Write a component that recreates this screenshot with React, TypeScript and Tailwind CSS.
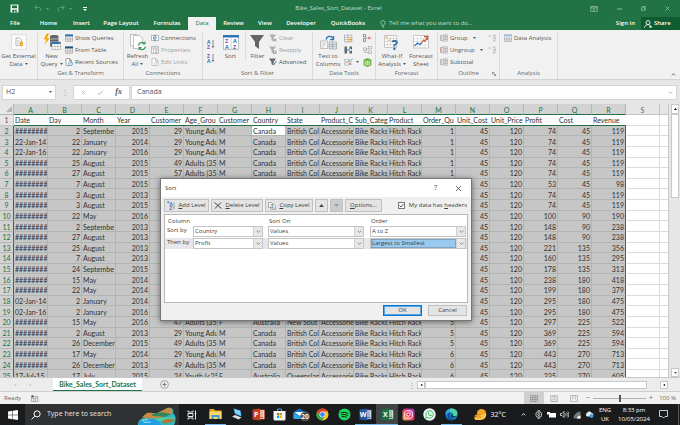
import type { ReactNode } from 'react';
import clsx from 'clsx';

type Row = (string | number)[];

const letters = 'ABCDEFGHIJKLMNOPQR'.split('');

const headings = [
  'Date', 'Day', 'Month', 'Year', 'Customer', 'Age_Grou', 'Customer', 'Country', 'State',
  'Product_C', 'Sub_Categ', 'Product', 'Order_Qu', 'Unit_Cost', 'Unit_Price', 'Profit', 'Cost', 'Revenue',
];

const young = 'Young Adu';
const adults = 'Adults (35';
const hash = '########';
const bc = 'British Col';

// date, day, month, year, age, group, gender, country, state, quantity, profit, cost, revenue
const orders: Row[] = [
  [hash, 2, 'Septembe', 2015, 29, young, 'M', 'Canada', bc, 1, 74, 45, 119],
  ['22-Jan-14', 22, 'January', 2014, 29, young, 'M', 'Canada', bc, 1, 74, 45, 119],
  ['22-Jan-16', 22, 'January', 2016, 29, young, 'M', 'Canada', bc, 1, 74, 45, 119],
  [hash, 25, 'August', 2015, 49, adults, 'M', 'Canada', bc, 1, 74, 45, 119],
  [hash, 27, 'August', 2015, 57, adults, 'M', 'Canada', bc, 1, 74, 45, 119],
  [hash, 7, 'August', 2015, '', '', '', '', '', '', 53, 45, 98],
  [hash, 3, 'August', 2013, '', '', '', '', '', '', 74, 45, 119],
  [hash, 3, 'August', 2015, '', '', '', '', '', '', 74, 45, 119],
  [hash, 22, 'May', 2016, '', '', '', '', '', '', 100, 90, 190],
  [hash, 2, 'Septembe', 2013, '', '', '', '', '', '', 148, 90, 238],
  [hash, 27, 'August', 2013, '', '', '', '', '', '', 148, 90, 238],
  [hash, 25, 'August', 2013, '', '', '', '', '', '', 221, 135, 356],
  [hash, 7, 'August', 2013, '', '', '', '', '', '', 160, 135, 295],
  [hash, 24, 'Septembe', 2015, '', '', '', '', '', '', 178, 135, 313],
  [hash, 15, 'May', 2014, '', '', '', '', '', '', 238, 180, 418],
  [hash, 22, 'May', 2014, '', '', '', '', '', '', 199, 180, 379],
  ['02-Jan-14', 2, 'January', 2014, '', '', '', '', '', '', 295, 180, 475],
  ['02-Jan-16', 2, 'January', 2016, '', '', '', '', '', '', 295, 180, 475],
  [hash, 15, 'May', 2016, 47, adults, 'F', 'Australia', 'New Sout', 5, 297, 225, 522],
  [hash, 2, 'August', 2013, 29, young, 'M', 'Canada', bc, 5, 369, 225, 594],
  [hash, 26, 'December', 2015, 49, adults, 'M', 'Canada', bc, 5, 369, 225, 594],
  [hash, 17, 'May', 2014, 29, young, 'M', 'Canada', bc, 6, 443, 270, 713],
  [hash, 26, 'December', 2013, 49, adults, 'M', 'Canada', bc, 6, 443, 270, 713],
  ['17-Jul-15', 17, 'July', 2015, 24, 'Youth (<25', 'F', 'Australia', 'Queenslan', 6, 335, 270, 605],
];

const rows = orders.map(order => [
  ...order.slice(0, 9),
  ...(order[8] ? ['Accessorie', 'Bike Racks', 'Hitch Rack'] : ['', '', '']),
  order[9],
  45,
  120,
  ...order.slice(10),
]);

const Caret = ({ className = 'text-[#555]' }: { className?: string }) => (
  <svg viewBox="0 0 6 4" className={clsx('h-[2px] w-[3px] shrink-0', className)} aria-hidden="true">
    <path d="M0 0h6L3 4z" fill="currentColor" />
  </svg>
);

const Chevron = ({ className = 'w-[5px]' }: { className?: string }) => (
  <svg viewBox="0 0 8 5" className={clsx('h-[3px]', className)} fill="none" stroke="currentColor" strokeWidth="1.4" aria-hidden="true">
    <path d="M1 1l3 3 3-3" />
  </svg>
);

const TitleBar = () => (
  <header className="flex h-[17px] items-center pl-[10px] pr-[10px] text-white">
    <button type="button" aria-label="Save" className="mr-[15px]">
      <svg viewBox="0 0 16 16" className="size-[9px]" aria-hidden="true">
        <path d="M1 1h14v14H1z" fill="#fff" />
        <path d="M3.500 2.500h9v5h-9zM4 10h8v4.500H9.500V12h-2v2.500H4z" fill="#217346" />
      </svg>
    </button>
    <button type="button" aria-label="Undo" className="mr-[8px] flex items-center gap-[4px] text-[#5f9c7a]">
      <svg viewBox="0 0 16 14" className="h-[7px] w-[8px]" fill="none" stroke="currentColor" strokeWidth="2" aria-hidden="true">
        <path d="M5 1L1.500 5 5 9M2 5h7c7 0 6 7 2 8" />
      </svg>
      <Caret className="text-[#5f9c7a]" />
    </button>
    <button type="button" aria-label="Redo" className="mr-[11px] flex items-center gap-[4px] text-[#5f9c7a]">
      <svg viewBox="0 0 16 14" className="h-[7px] w-[8px]" fill="none" stroke="currentColor" strokeWidth="2" aria-hidden="true">
        <path d="M11 1l3.500 4L11 9M14 5H7C0 5 1 12 5 13" />
      </svg>
      <Caret className="text-[#5f9c7a]" />
    </button>
    <button type="button" aria-label="Customize Quick Access Toolbar">
      <svg viewBox="0 0 6 6" className="size-[4px]" fill="#fff" aria-hidden="true">
        <path d="M0 0h6v1.500H0zM0 3h6L3 6z" />
      </svg>
    </button>
    <h1 className="flex-1 pl-[24px] text-center text-[6px] text-[#c3dccd]">Bike_Sales_Sort_Dataset - Excel</h1>
    <div className="flex w-[104px] items-center justify-end gap-[19px] text-[#8fbda3]">
      <svg viewBox="0 0 14 11" className="h-[6px] w-[8px]" fill="none" stroke="currentColor" strokeWidth="1.500" aria-label="Ribbon Display Options">
        <path d="M1 1h12v9H1zM1 3.500h12M7 9V5M5 7l2-2 2 2" />
      </svg>
      <svg viewBox="0 0 10 10" className="size-[5px]" stroke="currentColor" strokeWidth="2" aria-label="Minimize">
        <path d="M0 6h10" />
      </svg>
      <svg viewBox="0 0 10 10" className="size-[5px]" fill="none" stroke="currentColor" strokeWidth="1.500" aria-label="Restore">
        <path d="M1 3.500h6v6H1zM3 3V1h6.500v6H7.500" />
      </svg>
      <svg viewBox="0 0 10 10" className="size-[5px]" stroke="currentColor" strokeWidth="1.700" aria-label="Close">
        <path d="M1 1l8 8M9 1L1 9" />
      </svg>
    </div>
  </header>
);

const tabs = [
  { label: 'File', className: 'w-[30px]' },
  { label: 'Home', className: 'w-[37px]' },
  { label: 'Insert', className: 'w-[29px]' },
  { label: 'Page Layout', className: 'w-[50px]' },
  { label: 'Formulas', className: 'w-[42px]' },
  { label: 'Data', className: 'w-[28px]' },
  { label: 'Review', className: 'w-[35px]' },
  { label: 'View', className: 'w-[28px]' },
  { label: 'Developer', className: 'w-[44px]' },
  { label: 'QuickBooks', className: 'w-[50px]' },
];

const Tabs = () => (
  <nav className="flex h-[13px] items-stretch text-[6px] text-white">
    {tabs.map(({ label, className }) => (
      <button
        key={label}
        type="button"
        className={clsx('shrink-0 whitespace-nowrap text-center', className, label === 'Data' ? 'bg-[#f1f1f1] text-[#217346]' : 'font-semibold')}
      >
        {label}
      </button>
    ))}
    <button type="button" className="flex items-center gap-[3px] whitespace-nowrap pl-[7px] text-[#c3dccd]">
      <svg viewBox="0 0 10 14" className="h-[8px] w-[6px]" fill="none" stroke="currentColor" strokeWidth="1.300" aria-hidden="true">
        <path d="M3.500 10V8.500C0 6 1 1 5 1s5 5 1.500 7.500V10zM3.500 12.500h3" />
      </svg>
      Tell me what you want to do...
    </button>
    <div className="ml-auto flex font-semibold">
      <button type="button" className="px-[6px]">Sign in</button>
      <button type="button" className="flex w-[39px] items-center gap-[2px] bg-[#0e5c2f] pl-[3px]">
        <svg viewBox="0 0 14 14" className="size-[8px]" fill="none" stroke="#fff" strokeWidth="1.500" aria-hidden="true">
          <circle cx="7" cy="4.500" r="3.500" />
          <path d="M1 13.500C1 10 4 8 7 8c2 0 3 1 4 2M9 12h5M11.500 9.500v5" />
        </svg>
        Share
      </button>
    </div>
  </nav>
);

type GroupProps = { label?: string; className: string; children: ReactNode };

const Group = ({ label, className, children }: GroupProps) => (
  <section className={clsx('flex shrink-0 flex-col border-r border-[#dadada]', className)}>
    <div className="flex h-[37px] items-start">{children}</div>
    <p className="h-[9px] text-center leading-[9px] text-[#666]">{label}</p>
  </section>
);

type BigProps = { lines: [string, string?]; caret?: boolean; className: string; children: ReactNode };

const BigButton = ({ lines, caret, className, children }: BigProps) => (
  <button type="button" className={clsx('flex shrink-0 flex-col items-center whitespace-nowrap leading-[8px]', className)}>
    <span className="flex h-[20px] items-center">{children}</span>
    <span>{lines[0]}</span>
    {lines[1] && (
      <span className="flex items-center gap-[2px]">
        {lines[1]}
        {caret && <Caret />}
      </span>
    )}
  </button>
);

type SmallProps = { label: string; dim?: boolean; caret?: boolean; children: ReactNode };

const SmallButton = ({ label, dim, caret, children }: SmallProps) => (
  <button type="button" className={clsx('flex h-[12px] items-center gap-[2px] whitespace-nowrap', dim && 'text-[#a0a0a0]')}>
    {children}
    {label}
    {caret && <span className="pl-[3px]"><Caret /></span>}
  </button>
);

const TableIcon = ({ className = 'size-[8px]', color = '#2f75b5' }: { className?: string; color?: string }) => (
  <svg viewBox="0 0 16 16" className={clsx('shrink-0', className)} aria-hidden="true">
    <path d="M.5 1.500h15v13H.5z" fill="#fff" stroke="#808080" />
    <path d="M0 1h16v4H0z" fill={color} />
    <path d="M0 8.500h16M0 11.500h16M5.500 5v10M10.500 5v10" stroke="#909090" />
  </svg>
);

const PageIcon = ({ dim }: { dim?: boolean }) => (
  <svg viewBox="0 0 16 16" className="size-[8px] shrink-0" fill="none" aria-hidden="true">
    <path d="M2 1h7l4 4v10H2zM9 1v4h4" fill="#fff" stroke={dim ? '#aaa' : '#777'} strokeWidth="1.300" />
    <circle cx="11" cy="11.500" r="4" fill="#fff" stroke={dim ? '#aaa' : '#2f75b5'} strokeWidth="1.300" />
    <path d="M11 9.500v2h2" stroke={dim ? '#aaa' : '#2f75b5'} />
  </svg>
);

const ListIcon = () => (
  <svg viewBox="0 0 16 16" className="size-[8px] shrink-0" fill="none" stroke="#a5a5a5" strokeWidth="1.300" aria-hidden="true">
    <path d="M1 1h14v14H1zM1 4h14M4 7h2M8 7h5M4 10h2M8 10h5M4 13h2M8 13h5" />
  </svg>
);

const SortIcon = ({ descending }: { descending?: boolean }) => (
  <svg viewBox="0 0 16 20" className="h-[10px] w-[8px]" fontSize="10" fontWeight="700" aria-hidden="true">
    <text x="0" y={descending ? 19 : 9} fill="#2f75b5">A</text>
    <text x="0" y={descending ? 9 : 19} fill="#8a4fa3">Z</text>
    <path d="M12 2v15M9.500 14l2.500 3 2.500-3" fill="none" stroke="#666" strokeWidth="1.500" />
  </svg>
);

const Funnel = ({ className = 'size-[8px]', dim, mark }: { className?: string; dim?: boolean; mark?: string }) => (
  <svg viewBox="0 0 16 16" className={clsx('shrink-0', className)} aria-hidden="true">
    <path d="M0 1h14L9 8v7l-4-3V8z" fill={dim ? '#b0b0b0' : '#666'} />
    {mark && <path d={mark} fill="none" stroke={dim ? '#999' : '#2f75b5'} strokeWidth="2" />}
  </svg>
);

const OutlineIcon = ({ color }: { color: string }) => (
  <svg viewBox="0 0 16 16" className="size-[8px] shrink-0" fill="none" aria-hidden="true">
    <path d="M6 1.500h9v13H6zM6 5h9M6 8h9M6 11h9M10.500 1v13" stroke="#999" />
    <path d="M5 3H1.500v10H5M0 8h3" stroke={color} strokeWidth="1.300" />
  </svg>
);

const Ribbon = () => (
  <div className="flex h-[50px] shrink-0 border-b border-[#d2d2d2] bg-[#f1f1f1] pt-[2px] text-[6px] text-[#555]">
    <Group className="w-[38px]">
      <BigButton lines={['Get External', 'Data']} caret className="w-[37px]">
        <svg viewBox="0 0 32 32" className="size-[16px]" aria-hidden="true">
          <path d="M1 1h30v30H1z" fill="#fafafa" stroke="#c8c8c8" />
          <path d="M10 8h7l4 4v11H10z" fill="#fff" stroke="#777" />
          <path d="M12 13h5M12 16h5M12 19h4" stroke="#aaa" />
          <path d="M17 16c0-2 7-2 7 0v7c0 2-7 2-7 0z" fill="#e8b04b" />
        </svg>
      </BigButton>
    </Group>

    <Group label="Get & Transform" className="w-[86px]">
      <BigButton lines={['New', 'Query']} caret className="w-[27px]">
        <svg viewBox="0 0 36 36" className="size-[18px]" aria-hidden="true">
          <path d="M14 6c0-3 17-3 17 0v20c0 3-17 3-17 0z" fill="#666" />
          <path d="M14 12h17M14 18h17" stroke="#fff" />
          <path d="M7 1L1 13h5L3 24l11-14H8l5-9z" fill="#f0a30a" stroke="#fff" strokeWidth=".6" />
          <path d="M18 18h17v15H18z" fill="#fff" stroke="#888" />
          <path d="M18 18h17v4H18z" fill="#2f75b5" />
          <path d="M18 27h17M24 22v11M29.500 22v11" stroke="#999" />
        </svg>
      </BigButton>
      <div className="flex flex-col">
        <SmallButton label="Show Queries"><TableIcon /></SmallButton>
        <SmallButton label="From Table"><TableIcon color="#1f4e79" /></SmallButton>
        <SmallButton label="Recent Sources"><PageIcon /></SmallButton>
      </div>
    </Group>

    <Group label="Connections" className="w-[79px]">
      <BigButton lines={['Refresh', 'All']} caret className="w-[27px]">
        <svg viewBox="0 0 36 36" className="size-[18px]" fill="none" aria-hidden="true">
          <path d="M3 3h12l4 4v19H3z" fill="#fff" stroke="#888" />
          <path d="M9 5h12l6 6v20H9z" fill="#fff" stroke="#888" />
          <circle cx="26" cy="26" r="9" fill="#fff" />
          <path d="M19 25a7 7 0 0112-4M33 27a7 7 0 01-12 4" stroke="#3c9a5f" strokeWidth="3" />
          <path d="M33 16v7h-7zM19 35v-7h7z" fill="#3c9a5f" />
        </svg>
      </BigButton>
      <div className="flex flex-col">
        <SmallButton label="Connections">
          <svg viewBox="0 0 16 16" className="size-[8px] shrink-0" fill="none" aria-hidden="true">
            <path d="M1 3h14v10H1z" fill="#fff" stroke="#777" />
            <path d="M5 6h5v4H5zM8 1v4M8 11v4" stroke="#2f75b5" strokeWidth="1.500" />
          </svg>
        </SmallButton>
        <SmallButton label="Properties" dim><ListIcon /></SmallButton>
        <SmallButton label="Edit Links" dim><PageIcon dim /></SmallButton>
      </div>
    </Group>

    <Group label="Sort & Filter" className="w-[110px]">
      <div className="flex w-[16px] shrink-0 flex-col items-end">
        <button type="button" aria-label="Sort A to Z" className="mt-[4px] h-[16px] w-[12px]"><SortIcon /></button>
        <button type="button" aria-label="Sort Z to A" className="h-[12px] w-[12px]"><SortIcon descending /></button>
      </div>
      <BigButton lines={['Sort']} className="w-[23px]">
        <svg viewBox="0 0 32 30" className="h-[15px] w-[16px]" fontSize="11" fontWeight="700" aria-hidden="true">
          <path d="M1 1h30v28H1z" fill="#fff" stroke="#888" />
          <path d="M0 0h32v5H0z" fill="#2f75b5" />
          <path d="M16 5v24" stroke="#999" />
          <text x="4" y="16" fill="#8a4fa3">Z</text>
          <text x="4" y="27" fill="#2f75b5">A</text>
          <text x="20" y="16" fill="#2f75b5">A</text>
          <text x="20" y="27" fill="#8a4fa3">Z</text>
        </svg>
      </BigButton>
      <BigButton lines={['Filter']} className="ml-[3px] w-[24px] border-l border-[#dadada]">
        <Funnel className="size-[16px]" />
      </BigButton>
      <div className="flex flex-col">
        <SmallButton label="Clear" dim><Funnel dim mark="M9 9l6 6M15 9l-6 6" /></SmallButton>
        <SmallButton label="Reapply" dim><Funnel dim mark="M9 10h5v5H9z" /></SmallButton>
        <SmallButton label="Advanced"><Funnel mark="M15 6l-6 8" /></SmallButton>
      </div>
    </Group>

    <Group label="Data Tools" className="w-[63px]">
      <BigButton lines={['Text to', 'Columns']} className="w-[30px]">
        <svg viewBox="0 0 34 30" className="h-[15px] w-[17px]" fill="none" aria-hidden="true">
          <path d="M1 12h14v15H1z" fill="#fff" stroke="#888" />
          <path d="M18 14h15v14H18z" fill="#d9e6f2" stroke="#888" />
          <path d="M3 16h9M3 20h9M3 24h6M18 19h15M18 23h15M25 14v14" stroke="#888" />
          <path d="M12 9c2-8 11-8 14-2M27 2v7h-7" stroke="#2f75b5" strokeWidth="2.500" />
        </svg>
      </BigButton>
      <div className="grid grid-cols-[19px_11px] grid-rows-[12px_12px_12px] items-center pl-px">
        <svg viewBox="0 0 16 16" className="size-[9px]" fill="none" aria-label="Flash Fill">
          <path d="M1 2h13v12H1zM1 6h13M1 10h13M7 2v12" fill="#fff" stroke="#888" />
          <path d="M14 5l-6 6h3l-2 4 6-6h-3z" fill="#f0a30a" />
        </svg>
        <svg viewBox="0 0 18 16" className="h-[8px] w-[9px]" fill="none" aria-label="Consolidate">
          <path d="M1 1h4v5H1zM1 9h4v6H1z" stroke="#777" strokeWidth="1.500" />
          <path d="M5 8h4" stroke="#777" strokeWidth="1.500" />
          <path d="M17 8h-6M13 5l-3 3 3 3" stroke="#d1504c" strokeWidth="1.500" />
        </svg>
        <svg viewBox="0 0 18 16" className="h-[8px] w-[9px]" aria-label="Remove Duplicates">
          <path d="M1 1h5v14H1zM11 1h5v14h-5z" fill="#666" />
          <path d="M2 6h3v4H2z" fill="#2f75b5" />
          <path d="M6 8h5" stroke="#2f75b5" strokeWidth="2" />
          <path d="M12 6h3v4h-3z" fill="#fff" />
        </svg>
        <svg viewBox="0 0 18 16" className="h-[8px] w-[9px]" fill="none" stroke="#aaa" strokeWidth="1.500" aria-label="Relationships">
          <path d="M1 4h6v5H1zM11 1h6v5h-6zM11 10h6v5h-6zM7 6h4M4 9v4h7" />
        </svg>
        <span className="flex items-center gap-[3px]">
          <svg viewBox="0 0 18 16" className="h-[8px] w-[9px] shrink-0" fill="none" aria-label="Data Validation">
            <path d="M1 3h9v4H1zM1 10h9v4H1z" fill="#fff" stroke="#888" />
            <path d="M9 4l3 3 5-6" stroke="#3c9a5f" strokeWidth="1.500" />
            <path d="M10 9l5 5M15 9l-5 5" stroke="#d1504c" strokeWidth="1.500" />
          </svg>
          <Caret />
        </span>
        <svg viewBox="0 0 16 16" className="size-[9px]" aria-label="Manage Data Model">
          <path d="M8 0l7 3v10l-7 3-7-3V3z" fill="#6cb33f" />
          <path d="M4 6h8v6H4zM4 9h8M8 6v6" fill="none" stroke="#fff" />
        </svg>
      </div>
    </Group>

    <Group label="Forecast" className="w-[62px]">
      <BigButton lines={['What-If', 'Analysis']} caret className="w-[32px]">
        <svg viewBox="0 0 32 32" className="size-[16px]" aria-hidden="true">
          <path d="M1 3h24v24H1z" fill="#fff" stroke="#999" />
          <path d="M1 9h24M1 15h24M1 21h24M7 3v24M13 3v24M19 3v24" stroke="#bbb" />
          <path d="M3 5h3v3H3zM9 11h3v3H9z" fill="#e8b04b" />
          <text x="15" y="31" fontSize="27" fontWeight="700" fill="#2b6cb0">?</text>
        </svg>
      </BigButton>
      <BigButton lines={['Forecast', 'Sheet']} className="w-[26px]">
        <svg viewBox="0 0 32 32" className="size-[16px]" fill="none" aria-hidden="true">
          <path d="M1 3h30v25H1z" fill="#fff" stroke="#999" />
          <path d="M1 9h30M1 15h30M1 22h30M9 3v25M16 3v25M24 3v25" stroke="#ccc" />
          <path d="M3 24l6-6 5 3 4-4" stroke="#2f75b5" strokeWidth="2.500" />
          <path d="M17 18l4-6 3 2 5-8M29 12V5h-7" stroke="#d9542b" strokeWidth="2.500" />
        </svg>
      </BigButton>
    </Group>

    <Group label="Outline" className="w-[62px]">
      <div className="flex flex-col pl-[2px]">
        <SmallButton label="Group" caret><OutlineIcon color="#888" /></SmallButton>
        <SmallButton label="Ungroup" caret><OutlineIcon color="#d1504c" /></SmallButton>
        <SmallButton label="Subtotal"><OutlineIcon color="#888" /></SmallButton>
      </div>
      <div className="ml-auto flex flex-col pr-[3px] text-[#aaa]">
        {['Show Detail', 'Hide Detail'].map(label => (
          <button key={label} type="button" aria-label={label} className="flex h-[12px] items-center">
            <svg viewBox="0 0 16 16" className="size-[8px]" fill="none" stroke="currentColor" strokeWidth="1.500" aria-hidden="true">
              <path d="M1 4h5M9 2h5v4M9 8h5M9 14h5V6" />
            </svg>
          </button>
        ))}
        <button type="button" aria-label="Outline settings" className="mt-[16px] self-end text-[#777]">
          <svg viewBox="0 0 8 8" className="size-[4px]" fill="none" stroke="currentColor" strokeWidth="1.500" aria-hidden="true">
            <path d="M1 5V1h4M3 3l4 4M7 4v3H4" />
          </svg>
        </button>
      </div>
    </Group>

    <Group label="Analysis" className="w-[58px]">
      <div className="pl-[4px]">
        <SmallButton label="Data Analysis"><TableIcon color="#9dc3e6" /></SmallButton>
      </div>
    </Group>

    <button type="button" aria-label="Collapse the Ribbon" className="ml-auto self-end px-[4px] pb-[3px]">
      <Chevron className="w-[5px] rotate-180" />
    </button>
  </div>
);

const FormulaBar = () => (
  <div className="flex h-[24px] shrink-0 items-center gap-[4px] bg-[#e6e6e6] pl-[2px] pr-[3px] text-[7px] text-[#555]">
    <label className="flex h-[15px] w-[54px] items-center border border-[#d4d4d4] bg-white pl-[3px] pr-[3px]">
      <input aria-label="Name Box" defaultValue="H2" className="w-full min-w-0 bg-transparent outline-none" />
      <Caret />
    </label>
    <span className="w-[9px] text-center text-[8px] text-[#aaa]">⋮</span>
    <div className="flex h-[15px] w-[57px] items-center justify-between border border-[#d4d4d4] bg-white px-[7px]">
      <svg viewBox="0 0 10 10" className="size-[5px]" stroke="#b0b0b0" strokeWidth="1.500" aria-label="Cancel entry">
        <path d="M1 1l8 8M9 1L1 9" />
      </svg>
      <svg viewBox="0 0 12 10" className="h-[5px] w-[7px]" fill="none" stroke="#b0b0b0" strokeWidth="1.800" aria-label="Enter">
        <path d="M1 6l3 3 7-8" />
      </svg>
      <button type="button" aria-label="Insert Function" className="font-['Liberation_Serif',serif] text-[8px] font-bold italic leading-none">fx</button>
    </div>
    <label className="-ml-[3px] flex h-[15px] flex-1 items-center border border-[#d4d4d4] bg-white pl-[5px] pr-[3px]">
      <input aria-label="Formula Bar" defaultValue="Canada" className="w-full bg-transparent outline-none" />
      <Chevron className="w-[5px] text-[#aaa]" />
    </label>
  </div>
);

const Sheet = () => (
  <main className="flex min-h-0 flex-1 bg-[#e6e6e6]">
    <div className="min-w-0 flex-1 overflow-hidden bg-white">
      <table className="h-[277px] w-full table-fixed border-separate border-spacing-0 font-[Lato,sans-serif] text-[7px] leading-[8px] text-[#303030]">
        <colgroup>
          <col className="w-[14px]" />
          {letters.map(letter => <col key={letter} className="w-[34px]" />)}
          <col className="w-[34px]" />
          <col />
        </colgroup>
        <thead>
          <tr className="h-[11px] bg-[#d2d2d2] text-[#217346]">
            <th className="border-b border-r border-[#b5b5b5] bg-[#e6e6e6] p-0">
              <svg viewBox="0 0 8 8" className="ml-auto mr-px size-[6px]" aria-hidden="true"><path d="M8 0v8H0z" fill="#b5b5b5" /></svg>
            </th>
            {letters.map(letter => (
              <th key={letter} className="border-b border-r border-b-[#217346] border-r-[#b5b5b5] p-0 pt-px font-normal">{letter}</th>
            ))}
            <th className="border-b border-r border-[#c4c4c4] bg-[#e6e6e6] p-0 pt-px font-normal text-[#666]">S</th>
            <th className="border-b border-[#c4c4c4] bg-[#e6e6e6] p-0" />
          </tr>
        </thead>
        <tbody>
          <tr>
            <th className="border-b border-r border-[#c4c4c4] bg-[#e6e6e6] p-0 pt-px text-center font-normal text-[#555]">1</th>
            {headings.map((heading, i) => (
              <td key={i} className="overflow-hidden whitespace-nowrap border-b border-b-[#217346] p-0 pl-px pt-px">{heading}</td>
            ))}
            <td className="border-b border-r border-[#dcdcdc] p-0" />
            <td className="border-b border-[#dcdcdc] p-0" />
          </tr>
          {rows.map((row, i) => (
            <tr key={i}>
              <th className="border-b border-r border-b-[#b5b5b5] border-r-[#217346] bg-[#d2d2d2] p-0 pt-px text-center font-normal text-[#217346]">{i + 2}</th>
              {row.map((cell, j) => (
                <td
                  key={j}
                  className={clsx(
                    'overflow-hidden whitespace-nowrap border-b border-r border-b-[#b0b5b2] p-0 pt-px',
                    j === 17 ? 'border-r-[#217346]' : 'border-r-[#b0b5b2]',
                    i === 0 && j === 7 ? 'bg-white' : 'bg-[#c6c6c6]',
                    typeof cell === 'number' ? 'pr-px text-right' : 'pl-px',
                    cell === hash && 'text-center',
                  )}
                >
                  {cell}
                </td>
              ))}
              <td className="border-b border-r border-[#dcdcdc] p-0" />
              <td className="border-b border-[#dcdcdc] p-0" />
            </tr>
          ))}
        </tbody>
      </table>
    </div>
    <div className="flex w-[12px] flex-col items-center border-l border-[#c8c8c8] pl-px">
      <button type="button" aria-label="Scroll up" className="flex h-[10px] w-[8px] items-center justify-center border border-[#c8c8c8] bg-white">
        <Caret className="rotate-180" />
      </button>
      <div className="h-[84px] w-[8px] border border-[#c8c8c8] bg-white" />
      <button type="button" aria-label="Scroll down" className="mt-auto flex h-[9px] w-[8px] items-center justify-center border border-[#c8c8c8] bg-white">
        <Caret />
      </button>
    </div>
  </main>
);

const SheetTabs = () => (
  <div className="flex h-[14px] shrink-0 items-stretch border-t border-[#c8c8c8] bg-[#ececec] text-[6px]">
    <div className="flex w-[53px] items-center gap-[12px] pl-[14px]">
      <Caret className="rotate-90 text-[#bbb]" />
      <Caret className="-rotate-90 text-[#bbb]" />
    </div>
    <button type="button" className="w-[89px] border-b border-[#217346] bg-white font-[Lato,sans-serif] text-[7px] font-bold leading-[11px] text-[#217346]">
      Bike_Sales_Sort_Dataset
    </button>
    <button type="button" aria-label="New sheet" className="ml-[18px]">
      <svg viewBox="0 0 16 16" className="size-[9px]" fill="none" stroke="#777" aria-hidden="true">
        <circle cx="8" cy="8" r="7" />
        <path d="M8 4.500v7M4.500 8h7" strokeWidth="1.700" />
      </svg>
    </button>
    <div className="ml-auto flex w-[272px] items-center pr-[12px]">
      <span className="w-[9px] text-[8px] leading-none text-[#999]">⋮</span>
      <button type="button" aria-label="Scroll left" className="flex h-[8px] w-[8px] items-center justify-center border border-[#c8c8c8] bg-white">
        <Caret className="rotate-90" />
      </button>
      <div className="h-[8px] flex-1 border border-[#c8c8c8] bg-white" />
      <button type="button" aria-label="Scroll right" className="ml-[13px] flex h-[8px] w-[8px] items-center justify-center border border-[#c8c8c8] bg-white">
        <Caret className="-rotate-90" />
      </button>
    </div>
  </div>
);

const StatusBar = () => (
  <footer className="flex h-[13px] shrink-0 items-center border-t border-[#d0d0d0] bg-[#f1f1f1] pl-[4px] pr-[4px] text-[6px] text-[#666]">
    Ready
    <svg viewBox="0 0 16 14" className="ml-[10px] h-[7px] w-[8px]" fill="none" stroke="#777" aria-hidden="true">
      <path d="M1 3h13v10H1zM1 6h13M5 6v7M9 6v7" />
      <circle cx="3" cy="2.500" r="2" fill="#555" />
    </svg>
    <div className="ml-auto flex h-full items-center">
      <button type="button" aria-label="Normal" className="flex h-full w-[20px] items-center justify-center bg-[#cfcfcf]">
        <svg viewBox="0 0 16 14" className="h-[7px] w-[8px]" fill="none" stroke="#777" aria-hidden="true">
          <path d="M1 1h14v12H1zM1 5h14M1 9h14M5.500 1v12M10.500 1v12" />
        </svg>
      </button>
      <button type="button" aria-label="Page Layout" className="flex w-[20px] justify-center">
        <svg viewBox="0 0 16 14" className="h-[7px] w-[8px]" fill="none" stroke="#999" aria-hidden="true">
          <path d="M1 1h14v12H1zM4 3h8v10H4zM6 6h4M6 9h4" />
        </svg>
      </button>
      <button type="button" aria-label="Page Break Preview" className="flex w-[20px] justify-center">
        <svg viewBox="0 0 16 14" className="h-[7px] w-[8px]" fill="none" stroke="#888" aria-hidden="true">
          <path d="M1 1h14v12H1zM5.500 1v8M10.500 1v8" />
        </svg>
      </button>
      <button type="button" aria-label="Zoom out" className="w-[9px] text-center text-[7px]">−</button>
      <input
        type="range"
        aria-label="Zoom"
        min="10"
        max="190"
        defaultValue="100"
        className="h-[7px] w-[53px] appearance-none bg-[linear-gradient(#b0b0b0,#b0b0b0)] bg-[length:100%_1px] bg-center bg-no-repeat [&::-webkit-slider-thumb]:h-[7px] [&::-webkit-slider-thumb]:w-[2px] [&::-webkit-slider-thumb]:appearance-none [&::-webkit-slider-thumb]:bg-[#555]"
      />
      <button type="button" aria-label="Zoom in" className="w-[10px] text-center text-[7px]">+</button>
      <span className="w-[20px] text-right">100 %</span>
    </div>
  </footer>
);

type ComboProps = { label: string; value: string; className: string; active?: boolean };

const Combo = ({ label, value, className, active }: ComboProps) => (
  <div className={clsx('flex h-[11px] shrink-0 border border-[#c4c4c4] bg-white', className)}>
    <select
      aria-label={label}
      defaultValue={value}
      className={clsx('min-w-0 flex-1 appearance-none pl-px leading-[9px]', active ? 'bg-[#99c9ef] outline outline-1 -outline-offset-1 outline-[#7fa3c0]' : 'outline-none')}
    >
      <option>{value}</option>
    </select>
    <span className="flex w-[9px] items-center justify-center border-l border-[#d0d0d0] bg-[#e8e8e8] text-[#777]">
      <Chevron />
    </span>
  </div>
);

const ToolButton = ({ className, children }: { className: string; children: ReactNode }) => (
  <button type="button" className={clsx('flex h-[13px] shrink-0 items-center justify-center gap-[3px] whitespace-nowrap border border-[#c0c0c0]', className)}>
    {children}
  </button>
);

const levels = [
  { label: 'Sort by', column: 'Country', order: 'A to Z' },
  { label: 'Then by', column: 'Profit', order: 'Largest to Smallest' },
];

const SortDialog = () => (
  <div
    role="dialog"
    aria-labelledby="sort-title"
    className="absolute left-[160px] top-[178px] w-[312px] border border-[#777] bg-[#f0f0f0] text-[6px] text-[#404040] shadow-[0_1px_6px_rgba(0,0,0,0.5)]"
  >
    <div className="flex h-[18px] items-center bg-white pl-[4px] pr-[10px]">
      <h2 id="sort-title" className="flex-1">Sort</h2>
      <button type="button" aria-label="Help" className="mr-[19px] text-[7px]">?</button>
      <button type="button" aria-label="Close">
        <svg viewBox="0 0 10 10" className="size-[5px]" stroke="#333" strokeWidth="1.500" aria-hidden="true">
          <path d="M0 0l10 10M10 0L0 10" />
        </svg>
      </button>
    </div>

    <div className="px-[3px] pb-[4px] pt-[2px]">
      <div className="flex items-center gap-[2px]">
        <ToolButton className="w-[45px] bg-[#e4e4e4]">
          <svg viewBox="0 0 16 18" className="h-[9px] w-[8px]" fontSize="9" fontWeight="700" aria-hidden="true">
            <path d="M2.500 0v5M0 2.500h5" stroke="#2f75b5" strokeWidth="1.300" />
            <text x="5" y="9" fill="#2f75b5">A</text>
            <text x="5" y="17" fill="#8a4fa3">Z</text>
            <path d="M14 3v12M12.500 13l1.500 2 1.500-2" fill="none" stroke="#555" />
          </svg>
          <span><u>A</u>dd Level</span>
        </ToolButton>
        <ToolButton className="w-[52px] bg-[#e4e4e4]">
          <svg viewBox="0 0 16 14" className="h-[7px] w-[8px]" stroke="#444" strokeWidth="2" aria-hidden="true">
            <path d="M1 1l14 12M14 1L2 13" />
          </svg>
          <span><u>D</u>elete Level</span>
        </ToolButton>
        <ToolButton className="w-[48px] bg-[#e4e4e4]">
          <svg viewBox="0 0 16 16" className="size-[8px]" fill="#fff" stroke="#666" aria-hidden="true">
            <path d="M1 1h6l2 2v8H1zM6 5h6l3 3v7H6z" />
            <path d="M8 10h5M8 12.500h5" stroke="#2f75b5" />
          </svg>
          <span><u>C</u>opy Level</span>
        </ToolButton>
        <ToolButton className="w-[13px] bg-[#e4e4e4]">
          <svg viewBox="0 0 8 5" className="h-[3px] w-[5px]" aria-label="Move Up"><path d="M4 0l4 5H0z" fill="#444" /></svg>
        </ToolButton>
        <ToolButton className="w-[13px] bg-[#cccccc]">
          <svg viewBox="0 0 8 5" className="h-[3px] w-[5px]" aria-label="Move Down"><path d="M4 5l4-5H0z" fill="#999" /></svg>
        </ToolButton>
        <ToolButton className="w-[37px] bg-[#e4e4e4]"><span><u>O</u>ptions...</span></ToolButton>
        <label className="ml-auto flex items-center gap-[4px] whitespace-nowrap pr-px">
          <span className="grid">
            <input type="checkbox" defaultChecked className="peer col-start-1 row-start-1 size-[7px] appearance-none border border-[#777] bg-white" />
            <svg viewBox="0 0 14 14" className="pointer-events-none invisible col-start-1 row-start-1 size-[7px] peer-checked:visible" fill="none" stroke="#444" strokeWidth="1.800" aria-hidden="true">
              <path d="M3 7l3 3 5-6" />
            </svg>
          </span>
          <span>My data has <u>h</u>eaders</span>
        </label>
      </div>

      <div className="mt-[2px] h-[89px] border border-[#b8b8b8] bg-white pt-px">
        <div className="flex h-[10px] items-center pl-[3px]">
          <span className="w-[101px]">Column</span>
          <span className="w-[102px]">Sort On</span>
          <span>Order</span>
        </div>
        {levels.map(({ label, column, order }, i) => (
          <div key={label} className={clsx('mb-px flex h-[11px] items-start pl-[2px] pr-px', i === 1 && 'bg-[#e6e6ec]')}>
            <span className="w-[26px] leading-[8px]">{label}</span>
            <Combo label={`${label} column`} value={column} className="w-[70px]" />
            <Combo label={`${label} sort on`} value="Values" className="ml-[5px] w-[96px]" />
            <Combo label={`${label} order`} value={order} className="ml-[6px] w-[96px]" active={i === 1} />
          </div>
        ))}
      </div>

      <div className="mt-[2px] flex justify-end gap-[6px] pr-px">
        <button type="button" className="h-[11px] w-[39px] border border-[#0078d7] bg-[#e4e4e4] leading-[9px] outline outline-1 -outline-offset-2 outline-[#5aa5e0]">OK</button>
        <button type="button" className="h-[11px] w-[39px] border border-[#c0c0c0] bg-[#e4e4e4] leading-[9px]">Cancel</button>
      </div>
    </div>
  </div>
);

const Office = ({ letter, color, dark }: { letter: string; color: string; dark: string }) => (
  <svg viewBox="0 0 26 26" className="size-[13px]" aria-hidden="true">
    <path d="M13 4h12v18H13z" fill="#fff" stroke={color} strokeWidth="1.500" />
    <path d="M16 8h7M16 12h7M16 16h7M16 19h7" stroke={color} strokeWidth="1.800" />
    <path d="M1 3l15-2v24L1 23z" fill={dark} />
    <text x="8.500" y="18" textAnchor="middle" fontSize="14" fontWeight="700" fill="#fff">{letter}</text>
  </svg>
);

const apps: { name: string; open?: boolean; icon: ReactNode }[] = [
  {
    name: 'File Explorer',
    open: true,
    icon: (
      <svg viewBox="0 0 26 24" className="h-[12px] w-[13px]" aria-hidden="true">
        <path d="M1 2h9l2 3h13v17H1z" fill="#e9a820" />
        <path d="M1 7h24v15H1z" fill="#ffd765" />
        <path d="M5 22v-8h16v8h-4v-4H9v4z" fill="#3b9de0" />
      </svg>
    ),
  },
  {
    name: 'This PC',
    icon: (
      <svg viewBox="0 0 26 24" className="h-[12px] w-[13px]" aria-hidden="true">
        <path d="M5 1l14 4 2 12-13-5z" fill="#4cb4ee" />
        <path d="M7 3l11 3 1 8-10-4z" fill="#8ad5fa" />
        <path d="M2 17l6-3 13 5-6 4z" fill="#d8dee3" />
      </svg>
    ),
  },
  { name: 'PowerPoint', icon: <Office letter="P" color="#d35230" dark="#c43e1c" /> },
  {
    name: 'Microsoft Store',
    icon: (
      <svg viewBox="0 0 26 26" className="size-[13px]" aria-hidden="true">
        <path d="M9 6V2h8v4" fill="none" stroke="#3ba0e6" strokeWidth="2" />
        <path d="M1 6h24v16q0 3-3 3H4q-3 0-3-3z" fill="#f4f4f4" />
        <path d="M8 10h4.500v4.500H8z" fill="#f25022" />
        <path d="M13.500 10H18v4.500h-4.500z" fill="#7fba00" />
        <path d="M8 15.500h4.500V20H8z" fill="#00a4ef" />
        <path d="M13.500 15.500H18V20h-4.500z" fill="#ffb900" />
      </svg>
    ),
  },
  {
    name: 'Mail',
    icon: (
      <svg viewBox="0 0 34 26" className="h-[13px] w-[17px]" aria-hidden="true">
        <path d="M1 8L13 1l12 7v14H1z" fill="#0f6cbd" />
        <path d="M3 8h20l-10 8z" fill="#fff" />
        <path d="M1 9l12 8 12-8v13H1z" fill="#35a3ea" />
        <circle cx="24" cy="17" r="9" fill="#3a3f44" stroke="#aaa" />
        <text x="24" y="21.500" textAnchor="middle" fontSize="13" fontWeight="700" fill="#fff">20</text>
      </svg>
    ),
  },
  {
    name: 'Chrome',
    icon: (
      <svg viewBox="0 0 26 26" className="size-[13px]" aria-hidden="true">
        <circle cx="13" cy="13" r="12" fill="#fbc116" />
        <path d="M2.600 7A12 12 0 0123.400 7H13L8 16z" fill="#e33b2e" />
        <path d="M2.600 7A12 12 0 0012 25l6-9H8z" fill="#2da94f" />
        <circle cx="13" cy="13" r="5.500" fill="#4285f4" stroke="#fff" strokeWidth="1.500" />
      </svg>
    ),
  },
  {
    name: 'Spotify',
    icon: (
      <svg viewBox="0 0 26 26" className="size-[13px]" fill="none" aria-hidden="true">
        <circle cx="13" cy="13" r="12" fill="#1ed760" />
        <path d="M6 9.500c5-1.500 10-1 14 1.500M7 13.500c4-1 8-.7 12 1.500M8 17.500c3-.8 6-.6 9 1" stroke="#191414" strokeWidth="2" strokeLinecap="round" />
      </svg>
    ),
  },
  { name: 'Word', open: true, icon: <Office letter="W" color="#2b579a" dark="#2b579a" /> },
  { name: 'Excel', open: true, icon: <Office letter="X" color="#217346" dark="#1d7044" /> },
  {
    name: 'Instagram',
    icon: (
      <svg viewBox="0 0 26 26" className="size-[13px]" fill="none" aria-hidden="true">
        <defs>
          <linearGradient id="insta" x1="0" y1="1" x2="1" y2="0">
            <stop stopColor="#fdc04c" />
            <stop offset=".5" stopColor="#ee2a5e" />
            <stop offset="1" stopColor="#8a35d0" />
          </linearGradient>
        </defs>
        <rect x="1" y="1" width="24" height="24" rx="5" fill="url(#insta)" />
        <rect x="5.500" y="5.500" width="15" height="15" rx="4" stroke="#fff" strokeWidth="2" />
        <circle cx="13" cy="13" r="3.500" stroke="#fff" strokeWidth="2" />
        <circle cx="17.500" cy="8.500" r="1" fill="#fff" />
      </svg>
    ),
  },
  {
    name: 'WhatsApp',
    icon: (
      <svg viewBox="0 0 26 26" className="size-[13px]" fill="none" aria-hidden="true">
        <circle cx="13" cy="13" r="12.500" fill="#f5f5f5" />
        <path d="M5.500 20.500l1.200-4A7.500 7.500 0 119.500 19.300z" stroke="#2fc45c" strokeWidth="2" />
        <path d="M10 9c-1 4 3 8 7 7l.5-2-2-1-1 1c-1.500-.5-2.500-1.500-3-3l1-1-1-2z" fill="#2fc45c" />
      </svg>
    ),
  },
  {
    name: 'Edge',
    open: true,
    icon: (
      <svg viewBox="0 0 26 26" className="size-[13px]" aria-hidden="true">
        <circle cx="13" cy="13" r="12" fill="#1683d8" />
        <path d="M1 13C1 4 9 1 14 1c7 0 11 5 11 10 0 4-3 6-6 6-4 0-4-2-3-4 0-3-3-5-6-5-4 0-8 2-9 5z" fill="#4fd3a5" />
        <path d="M1 13C1 4 9 1 14 1c-4 1-5 4-4 7-4 0-8 2-9 5z" fill="#2ba7dc" />
        <path d="M9 13c-1 6 4 10 11 9-8 6-17 0-15-8 1-3 4-5 7-4-2 0-3 2-3 3z" fill="#0c4f94" />
        <path d="M16 13c-1 2-1 4 3 4h4c-3 3-9 3-11-1 0-2 2-4 4-3z" fill="#1c1f22" />
      </svg>
    ),
  },
];

const Taskbar = () => (
  <nav aria-label="Taskbar" className="flex h-[21px] shrink-0 items-stretch bg-[#191b1c] text-white">
    <button type="button" aria-label="Start" className="flex w-[25px] items-center justify-center">
      <svg viewBox="0 0 20 20" className="size-[10px]" fill="#fff" aria-hidden="true">
        <path d="M0 3l9-1.500V9.500H0zM10 1.300L20 0v9.500H10zM0 10.500h9v8L0 17zM10 10.500h10V20l-10-1.500z" />
      </svg>
    </button>
    <label className="flex w-[154px] items-center bg-[#303132] pl-[6px]">
      <svg viewBox="0 0 18 18" className="mr-[6px] size-[10px] shrink-0" fill="none" stroke="#fff" strokeWidth="1.800" aria-hidden="true">
        <circle cx="11" cy="7" r="5.500" />
        <path d="M7 11l-6 6" />
      </svg>
      <input type="text" placeholder="Type here to search" className="w-[90px] min-w-0 bg-transparent text-[7px] outline-none placeholder:text-[#e4e4e4]" />
      <svg viewBox="0 0 80 36" className="h-[18px] w-[40px] shrink-0 self-end" aria-hidden="true">
        <path d="M2 36c0-10 8-16 20-16l18-8 22-10c9-2 12 4 10 11 6 2 7 14 2 23z" fill="#32b6bd" />
        <path d="M4 36c0-8 8-13 18-12 10-3 20 1 27 12z" fill="#1c9fe5" />
        <path d="M10 20l10-8c8-2 16 2 22 0l18-10c8-2 13 5 10 11l-20 8c-14 1-26 5-40-1z" fill="#c58d43" />
        <path d="M28 16c12-7 25-6 40-2l-12 6c-10-2-18 1-28-4z" fill="#36845e" />
        <path d="M34 25c12-3 20-6 42-3l-14 9z" fill="#54d2a8" />
        <path d="M49 28c9-5 17-6 27-3-2 5-12 7-22 8z" fill="#a87a39" />
        <path d="M10 27l12-2M13 31l15-1" stroke="#a5e8fa" strokeWidth="2" />
      </svg>
    </label>
    <button type="button" aria-label="Task View" className="flex w-[26px] items-center justify-center">
      <svg viewBox="0 0 20 20" className="size-[10px]" fill="none" stroke="#fff" strokeWidth="1.800" aria-hidden="true">
        <path d="M2 1v3h10V1M2 7h10v6H2zM2 19v-3h10v3M17 1v18M15.500 7h3" />
      </svg>
    </button>
    <div className="flex w-[257px] shrink-0">
      {apps.map(({ name, open, icon }) => (
        <button
          key={name}
          type="button"
          aria-label={name}
          className={clsx('flex flex-1 items-center justify-center border-b', open ? 'border-[#76b9ed]' : 'border-transparent', name === 'Excel' && 'bg-[#414546]')}
        >
          {icon}
        </button>
      ))}
    </div>
    <div className="ml-auto flex items-center pr-px text-[6px] leading-[9px]">
      <button type="button" className="flex items-center gap-[4px] text-[7px]">
        <svg viewBox="0 0 26 26" className="size-[13px]" aria-hidden="true">
          <circle cx="15" cy="11" r="9" fill="#f5a623" />
          <path d="M1 14h14c4 0 8-3 8-6 4 7 0 16-9 16H5c-5 0-6-7 0-7z" fill="#f8c34f" />
          <path d="M3 14h10M0 18h14" stroke="#e07a1b" strokeWidth="2" />
        </svg>
        32°C
      </button>
      <Chevron className="ml-[14px] mr-[8px] w-[7px] rotate-180" />
      <div className="flex items-center gap-[4px]">
        <svg viewBox="0 0 16 18" className="h-[9px] w-[8px]" fill="none" stroke="#fff" strokeWidth="1.500" aria-label="Meet Now">
          <rect x="2" y="4" width="11" height="10" rx="3" />
          <path d="M5 1.500h5M5 16.500h5" />
          <circle cx="7.500" cy="9" r="2" />
        </svg>
        <svg viewBox="0 0 18 14" className="h-[7px] w-[9px]" aria-label="Battery">
          <path d="M4 4h14v9H4zM0 2h6v5H0z" fill="#fff" />
        </svg>
        <svg viewBox="0 0 18 14" className="h-[7px] w-[9px]" fill="none" stroke="#fff" strokeWidth="1.400" aria-label="Volume">
          <path d="M1 5h3l4-4v12L4 9H1zM10.500 5c1 1 1 3 0 4M13 3c2 2 2 6 0 8M15.500 1c3 3 3 9 0 12" />
        </svg>
        <svg viewBox="0 0 16 16" className="size-[8px]" aria-label="Network">
          <path d="M15 1v14H1C1 8 7 1 15 1z" fill="#777" />
          <path d="M15 9v6H8c0-3 3-6 7-6z" fill="#fff" />
        </svg>
        <svg viewBox="0 0 18 14" className="h-[7px] w-[9px]" aria-label="OneDrive">
          <path d="M4 11a4 4 0 010-7c2-4 8-4 9 0 5 0 5 7 0 7z" fill="#e6eef5" />
          <circle cx="13" cy="10" r="4" fill="#3b9de0" />
        </svg>
      </div>
      <button type="button" className="ml-[3px] w-[16px] text-center">ENG<br />UK</button>
      <button type="button" className="ml-[3px] w-[36px] whitespace-nowrap text-center">8:33 pm<br />10/05/2024</button>
      <button type="button" aria-label="Notifications" className="ml-[7px] mr-[10px]">
        <svg viewBox="0 0 18 18" className="size-[9px]" fill="none" stroke="#fff" strokeWidth="1.500" aria-hidden="true">
          <path d="M1 1h16v12h-5l-3 3-3-3H1z" />
        </svg>
      </button>
      <span className="h-[21px] w-px bg-[#555]" />
    </div>
  </nav>
);

export default function App() {
  return (
    <div className="relative flex h-screen flex-col overflow-hidden bg-[#e6e6e6] font-['Open_Sans','Noto_Sans',sans-serif]">
      <div className="shrink-0 bg-[#217346]">
        <TitleBar />
        <Tabs />
      </div>
      <Ribbon />
      <FormulaBar />
      <Sheet />
      <SheetTabs />
      <StatusBar />
      <Taskbar />
      <SortDialog />
    </div>
  );
}
